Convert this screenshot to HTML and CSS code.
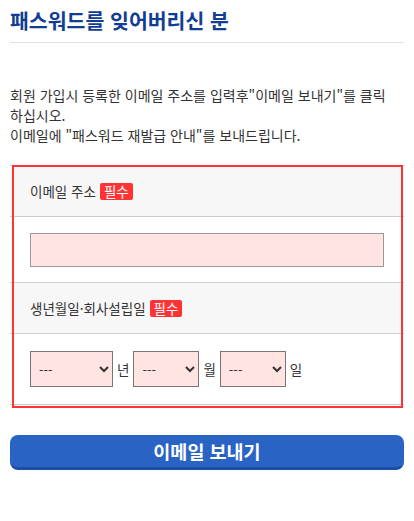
FILE: index.html
```html
<!DOCTYPE html>
<html lang="ko">
<head>
    <meta charset="UTF-8">
    <meta name="viewport" content="width=device-width, initial-scale=1.0">
    <title>패스워드 찾기</title>
    <link rel="stylesheet" href="styles.css">
</head>
<body>
    <div class="wrap">
        <h2 class="title">패스워드를 잊어버리신 분</h2>

        <p class="desc">
            회원 가입시 등록한 이메일 주소를 입력후"이메일 보내기"를 클릭하십시오.<br>
            이메일에 "패스워드 재발급 안내"를 보내드립니다.
        </p>

        <div class="form">
            <div class="row-head">
                <label for="email">이메일 주소</label>
                <span class="req">필수</span>
            </div>
            <div class="row-field">
                <input type="text" id="email" name="email" class="text-input">
            </div>
            <div class="row-head">
                <label for="year">생년월일·회사설립일</label>
                <span class="req">필수</span>
            </div>
            <div class="row-field row-date">
                <select id="year" name="year" class="sel sel-year"><option>---</option></select>
                <span class="unit">년</span>
                <select name="month" class="sel"><option>---</option></select>
                <span class="unit">월</span>
                <select name="day" class="sel"><option>---</option></select>
                <span class="unit">일</span>
            </div>
        </div>

        <button type="button" class="btn-send">이메일 보내기</button>
    </div>
</body>
</html>
```

FILE: styles.css
```css
body {
    margin: 0;
    font-family: "Noto Sans CJK KR", "Noto Sans", sans-serif;
    font-size: 13.5px;
    color: #333;
    background: #fff;
}
.wrap {
    padding: 0 10px;
}
.title {
    margin: 0;
    padding: 7px 0 9px;
    font-size: 20.5px;
    line-height: 26px;
    font-weight: bold;
    color: #123d94;
    border-bottom: 1px solid #e1e1e1;
}
.desc {
    margin: 42px 0 0;
    padding-right: 8px;
    font-size: 14px;
    line-height: 20px;
}
/* 입력 폼 */
.form {
    position: relative;
    margin-top: 20px;
    border-top: 1px solid #ccc;
}
.form::after {
    content: '';
    position: absolute;
    top: -1px;
    left: 2px;
    right: 1px;
    bottom: -3px;
    border: 2px solid #f33;
    pointer-events: none;
}
.row-head {
    display: flex;
    align-items: center;
    height: 50px;
    padding: 0 20px;
    background: #f7f7f7;
    border-bottom: 1px solid #ccc;
}
.req {
    margin-left: 4px;
    padding: 0 4px;
    line-height: 17px;
    border-radius: 2px;
    background: #f33;
    color: #fff;
}
.row-field {
    padding: 16px 20px 15px;
    border-bottom: 1px solid #ccc;
}
.text-input {
    display: block;
    box-sizing: border-box;
    width: 100%;
    height: 34px;
    margin: 0;
    border: 1px solid #999;
    background: #ffe4e1;
}
.row-date {
    display: flex;
    align-items: center;
    padding: 17px 20px;
}
.sel {
    box-sizing: border-box;
    width: 66px;
    height: 36px;
    margin: 0;
    padding: 0 4px;
    border: 1px solid #767676;
    border-radius: 0;
    background: #ffe4e1;
    font-family: inherit;
    font-size: 13px;
    color: #333;
}
.sel-year {
    width: 83px;
}
.unit {
    margin: 0 4px;
}
.btn-send {
    display: block;
    width: 100%;
    height: 35px;
    margin-top: 30px;
    border: 0;
    border-bottom: 3px solid #1b4ea5;
    border-radius: 8px;
    background: #2964c5;
    color: #fff;
    font-family: inherit;
    font-size: 18.5px;
    font-weight: bold;
}
```
